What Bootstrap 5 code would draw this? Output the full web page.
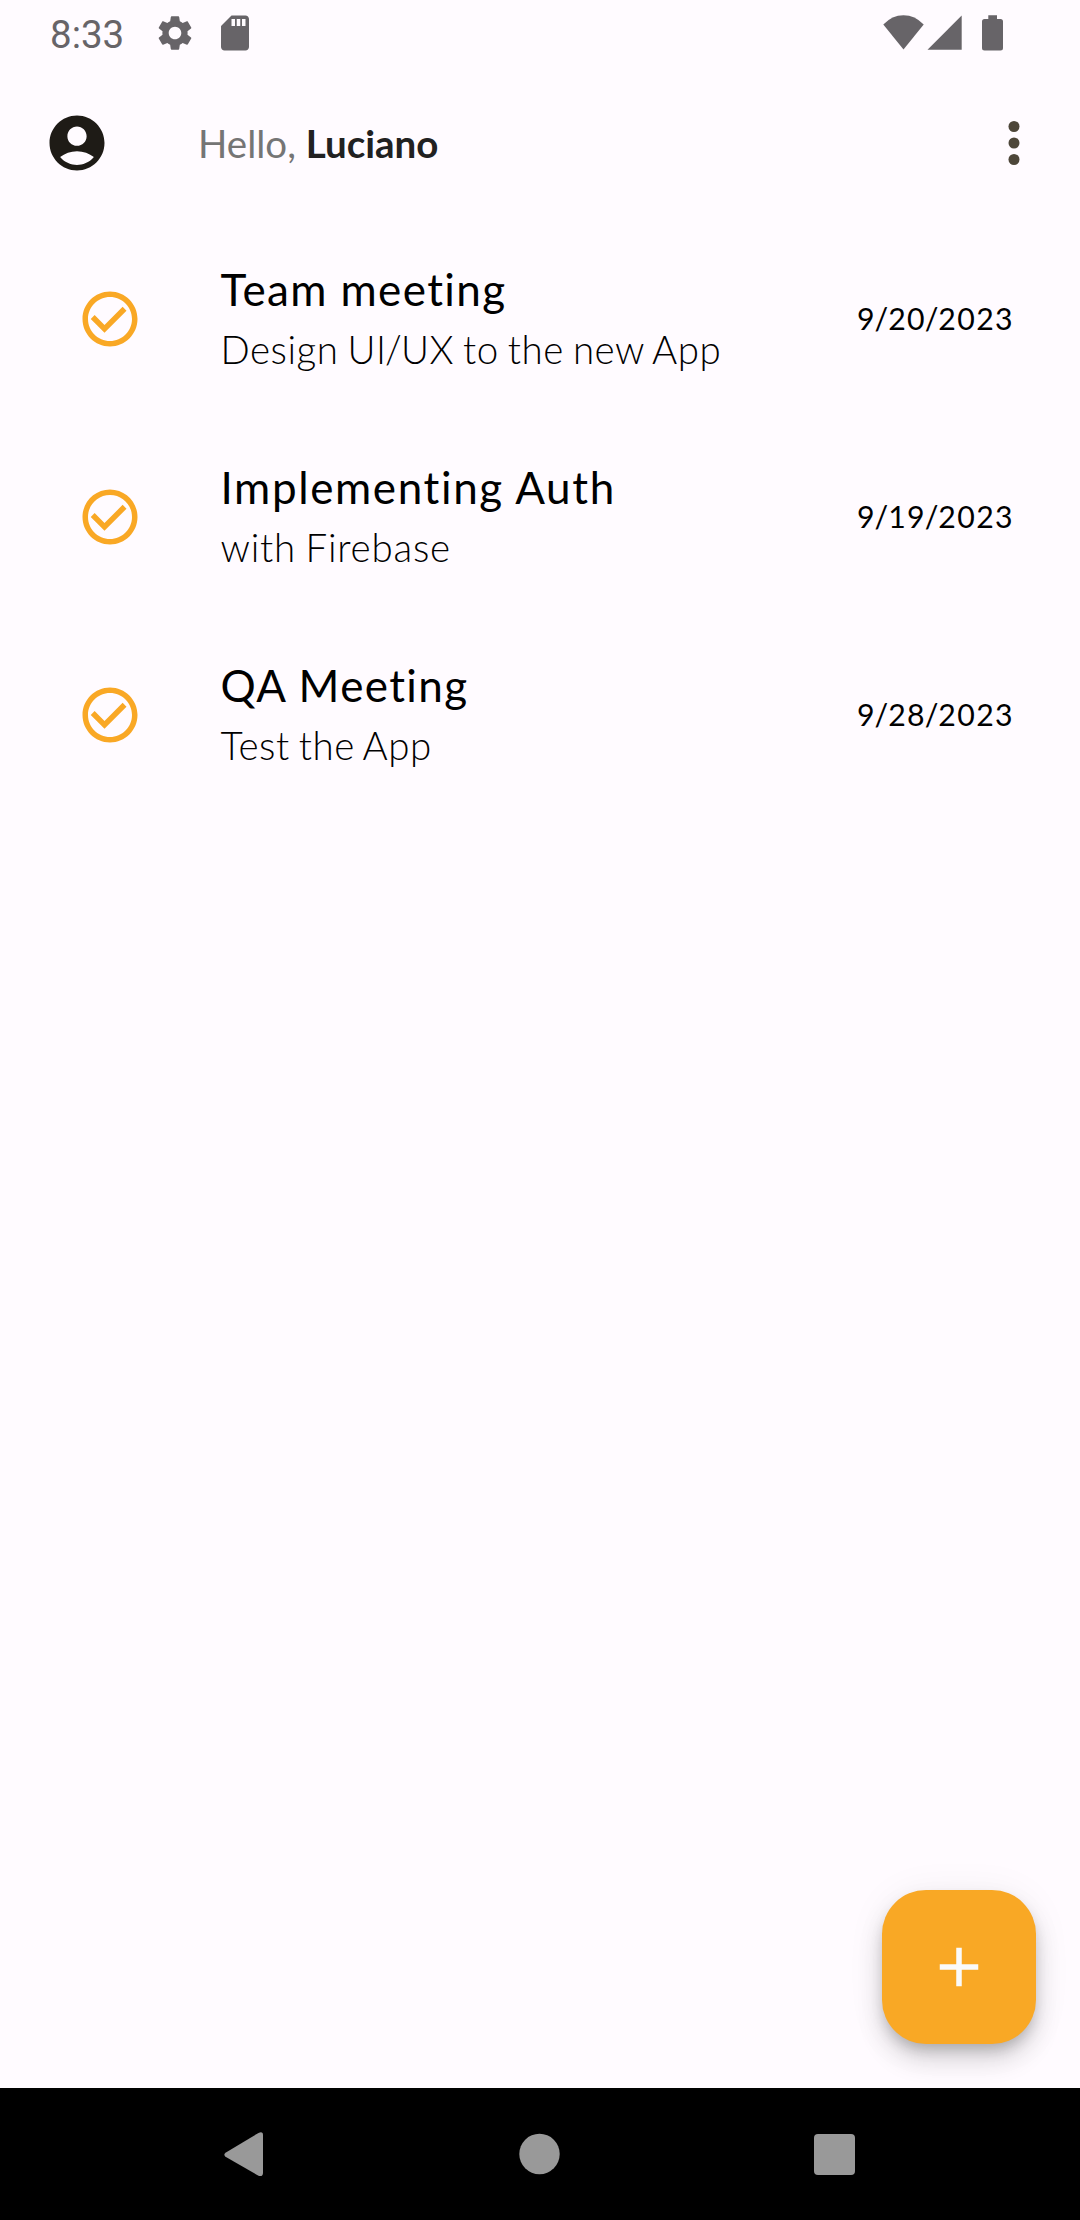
<!DOCTYPE html>
<html lang="en">
<head>
<meta charset="utf-8">
<meta name="viewport" content="width=device-width, initial-scale=1">
<title>Tasks</title>
<link href="https://cdn.jsdelivr.net/npm/bootstrap@5.3.0/dist/css/bootstrap.min.css" rel="stylesheet">
<style>
  body { background: #fffbff; font-family: Lato, sans-serif; color: #000; font-size: 38.5px; }
  .screen { height: 2220px; overflow: hidden; }
  svg { display: block; flex: none; }
  .statusbar { height: 66px; padding: 0 76px 0 50px; color: #676468; }
  .clock { font: 400 38.5px/69px Roboto, sans-serif; width: 74px; }
  .gear { margin: 12px 0 0 29.5px; }
  .sdcard { margin: 12px 0 0 18.5px; }
  .appbar { height: 154px; padding: 0 33px 0 44px; }
  .hello { margin-left: 88px; color: #757575; line-height: 46px; }
  .hello b { color: #212121; font-weight: 700; }
  .task { height: 198px; padding: 0 66px 0 77px; }
  .task-text { margin-left: 77.500px; padding-bottom: 6px; font-kerning: normal; }
  .task-title { font-size: 44px; line-height: 66px; letter-spacing: 1.375px; }
  .task-title.wide { letter-spacing: 1.62px; }
  .task-sub { font-weight: 300; line-height: 55px; letter-spacing: .5px; word-spacing: -1.800px; }
  .task-sub.wide { letter-spacing: .8px; }
  .task-date { font-size: 30.25px; line-height: 44px; letter-spacing: 1.375px; padding-bottom: 2px; }
  .slash { margin: 0 -1.400px; }
  .fab { width: 154px; height: 154px; border: 0; border-radius: 44px; background: #f9a825; color: #fafafa; margin: 0 44px 44px auto;
    box-shadow: 0 8px 14px -3px rgba(0,0,0,.2), 0 16px 27px 0 rgba(0,0,0,.14), 0 3px 40px 0 rgba(0,0,0,.06); }
  .sysnav { height: 132px; background: #000; color: #999; padding: 0 224px; }
</style>
</head>
<body>
<div class="screen d-flex flex-column">
  <div class="statusbar d-flex align-items-start">
    <div class="clock">8:33</div>
    <svg class="gear" width="42" height="42" viewBox="0 0 24 24" fill="currentColor"><path d="M19.14 12.94c.04-.3.06-.61.06-.94 0-.32-.02-.64-.07-.94l2.03-1.58c.18-.14.23-.41.12-.61l-1.92-3.32c-.12-.22-.37-.29-.59-.22l-2.39.96c-.5-.38-1.03-.7-1.62-.94l-.36-2.54c-.04-.24-.24-.41-.48-.41h-3.84c-.24 0-.43.17-.47.41l-.36 2.54c-.59.24-1.13.57-1.62.94l-2.39-.96c-.22-.08-.47 0-.59.22L2.74 8.87c-.12.21-.08.47.12.61l2.03 1.58c-.05.3-.09.63-.09.94s.02.64.07.94l-2.03 1.58c-.18.14-.23.41-.12.61l1.92 3.32c.12.22.37.29.59.22l2.39-.96c.5.38 1.03.7 1.62.94l.36 2.54c.05.24.24.41.48.41h3.84c.24 0 .44-.17.47-.41l.36-2.54c.59-.24 1.13-.56 1.62-.94l2.39.96c.22.08.47 0 .59-.22l1.92-3.32c.12-.22.07-.47-.12-.61l-2.01-1.58zM12 15.6c-1.980 0-3.600-1.620-3.600-3.600s1.620-3.600 3.600-3.600 3.600 1.620 3.600 3.600-1.620 3.600-3.600 3.600z"/></svg>
    <svg class="sdcard" width="42" height="42" viewBox="0 0 24 24" fill="currentColor"><path d="M18 2h-8L4.020 8 4 20c0 1.100.9 2 2 2h12c1.100 0 2-.9 2-2V4c0-1.100-.9-2-2-2zm-6 6h-2V4h2v4zm3 0h-2V4h2v4zm3 0h-2V4h2v4z"/></svg>
    <svg class="ms-auto" width="122" height="66" viewBox="882 0 122 66" fill="currentColor"><path d="M883.300 24.500Q892 15.200 903.500 15.200T923.700 24.500L903.500 49.400z"/><path d="M927.500 49.700L961.700 15.500v34.200z"/><path d="M988.300 15.300h8.700v3.700h3.500q2.500 0 2.500 2.500v26.500q0 2.500-2.500 2.500h-16q-2.500 0-2.500-2.500v-26.500q0-2.500 2.500-2.500h3.800z"/></svg>
  </div>

  <header class="appbar d-flex align-items-center">
    <svg width="66" height="66" viewBox="0 0 24 24" fill="#1e1b16"><path d="M12 2C6.480 2 2 6.480 2 12s4.480 10 10 10 10-4.480 10-10S17.520 2 12 2zm0 4c1.930 0 3.500 1.570 3.500 3.500S13.930 13 12 13s-3.500-1.570-3.500-3.500S10.070 6 12 6zm0 14c-2.030 0-4.430-.82-6.140-2.880C7.550 15.800 9.680 15 12 15s4.450.8 6.140 2.120C16.430 19.180 14.030 20 12 20z"/></svg>
    <div class="hello">Hello, <b>Luciano</b></div>
    <svg class="ms-auto" width="66" height="66" viewBox="0 0 24 24" fill="#4d4639"><circle cx="12" cy="6" r="2"/><circle cx="12" cy="12" r="2"/><circle cx="12" cy="18" r="2"/></svg>
  </header>

  <main class="flex-grow-1">
    <div class="task d-flex align-items-center">
      <svg width="66" height="66" viewBox="0 0 24 24" fill="#f9a825"><path d="M16.590 7.580L10 14.170l-3.590-3.580L5 12l5 5 8-8zM12 2C6.480 2 2 6.480 2 12s4.480 10 10 10 10-4.480 10-10S17.520 2 12 2zm0 18c-4.420 0-8-3.580-8-8s3.580-8 8-8 8 3.580 8 8-3.580 8-8 8z"/></svg>
      <div class="task-text"><div class="task-title">Team meeting</div><div class="task-sub">Design UI<span class="slash">/</span>UX to the new App</div></div>
      <div class="task-date ms-auto">9<span class="slash">/</span>20<span class="slash">/</span>2023</div>
    </div>
    <div class="task d-flex align-items-center">
      <svg width="66" height="66" viewBox="0 0 24 24" fill="#f9a825"><path d="M16.590 7.580L10 14.170l-3.590-3.580L5 12l5 5 8-8zM12 2C6.480 2 2 6.480 2 12s4.480 10 10 10 10-4.480 10-10S17.520 2 12 2zm0 18c-4.420 0-8-3.580-8-8s3.580-8 8-8 8 3.580 8 8-3.580 8-8 8z"/></svg>
      <div class="task-text"><div class="task-title wide">Implementing Auth</div><div class="task-sub wide">with Firebase</div></div>
      <div class="task-date ms-auto">9<span class="slash">/</span>19<span class="slash">/</span>2023</div>
    </div>
    <div class="task d-flex align-items-center">
      <svg width="66" height="66" viewBox="0 0 24 24" fill="#f9a825"><path d="M16.590 7.580L10 14.170l-3.590-3.580L5 12l5 5 8-8zM12 2C6.480 2 2 6.480 2 12s4.480 10 10 10 10-4.480 10-10S17.520 2 12 2zm0 18c-4.420 0-8-3.580-8-8s3.580-8 8-8 8 3.580 8 8-3.580 8-8 8z"/></svg>
      <div class="task-text"><div class="task-title">QA Meeting</div><div class="task-sub">Test the App</div></div>
      <div class="task-date ms-auto">9<span class="slash">/</span>28<span class="slash">/</span>2023</div>
    </div>
  </main>

  <button class="fab d-flex align-items-center justify-content-center flex-shrink-0" aria-label="Add task">
    <svg width="66" height="66" viewBox="0 0 24 24" fill="currentColor"><path d="M19 13h-6v6h-2v-6H5v-2h6V5h2v6h6v2z"/></svg>
  </button>

  <nav class="sysnav d-flex align-items-center justify-content-between flex-shrink-0">
    <svg width="40" height="46" viewBox="0 0 40 46" fill="currentColor"><path d="M1.500 21.800L34.500 1.900Q39 0 39 4V42Q39 46 34.500 44.800L1.500 25.800Q-.8 23.800 1.500 21.800z"/></svg>
    <svg width="41" height="42" viewBox="0 0 41 42" fill="currentColor"><circle cx="20.500" cy="21" r="20.200"/></svg>
    <svg width="42" height="42" viewBox="0 0 42 42" fill="currentColor"><rect y="1" width="41" height="41" rx="4"/></svg>
  </nav>
</div>
<script src="https://cdn.jsdelivr.net/npm/bootstrap@5.3.0/dist/js/bootstrap.bundle.min.js"></script>
</body>
</html>
